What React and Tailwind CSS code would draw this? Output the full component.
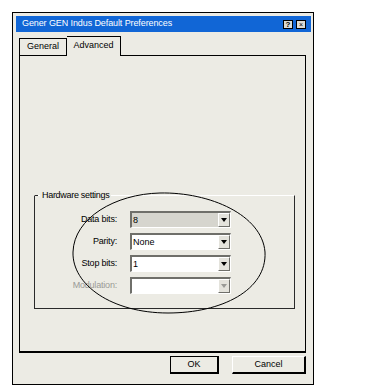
import React from "react";

const font = { fontFamily: '"Liberation Sans", Arial, sans-serif' };

const Combo = ({ value, disabled, grey }) => {
  return (
    <div
      className={`w-[101px] h-[17px] flex border-t-2 border-l-2 border-t-[#6f6f6a] border-l-[#6f6f6a] border-b border-r border-b-white border-r-white ${
        grey ? "bg-[#d6d5ce]" : "bg-white"
      } ${disabled ? "bg-[#ecebe4]" : ""}`}
    >
      <div className="flex-1 text-[9px] leading-[14px] pl-[1px] text-black">{value}</div>
      <div className="w-[12px] h-[14px] bg-[#e4e3dc] border-t border-l border-white border-r border-b border-r-[#6f6f6a] border-b-[#6f6f6a] flex items-center justify-center">
        <div
          className={`w-0 h-0 border-l-[3px] border-r-[3px] border-t-[4px] border-l-transparent border-r-transparent ${
            disabled ? "border-t-[#9a9a96]" : "border-t-black"
          }`}
        />
      </div>
    </div>
  );
};

const Row = ({ label, value, grey, disabled }) => (
  <div className="flex items-center h-[17px]">
    <div
      className={`w-[85px] text-right text-[9px] tracking-[-0.2px] pr-[13px] ${
        disabled ? "text-[#9a9a96]" : "text-black"
      }`}
    >
      {label}
    </div>
    <Combo value={value} grey={grey} disabled={disabled} />
  </div>
);

export default function App() {
  return (
    <div className="w-[392px] h-[389px] bg-white relative overflow-hidden" style={font}>
      <div className="ml-[12px] mt-[12px] w-[302px] h-[373px] border border-black bg-[#ecebe4] pt-[3px] pl-[3px] pr-[2px] flex flex-col">
        {/* title bar */}
        <div className="h-[16px] bg-[#1166d6] flex items-center pl-[6px] pr-[5px]">
          <div className="flex-1 text-white text-[9px] tracking-[-0.1px]">
            Gener GEN Indus Default Preferences
          </div>
          <div className="flex gap-[3px]">
            <div className="w-[10px] h-[9px] bg-[#dcdbd4] border border-black text-[8px] leading-[7px] font-bold text-center text-black">
              ?
            </div>
            <div className="w-[10px] h-[9px] bg-[#dcdbd4] border border-black text-[7px] leading-[7px] text-center text-black">
              ×
            </div>
          </div>
        </div>

        {/* tabs */}
        <div className="mt-[4px] ml-[3px] mr-[5px] flex flex-col">
          <div className="flex items-end h-[19px]">
            <div className="w-[48px] h-[17px] border border-b-0 border-black text-[9px] leading-[15px] text-center text-black">
              General
            </div>
            <div className="w-[54px] h-[20px] border border-black border-l-0 border-b-0 bg-[#ecebe4] text-[9px] leading-[17px] text-center text-black relative top-[1px]">
              Advanced
            </div>
          </div>
          <div className="h-[298px] border border-black border-b-2 pt-[139px] pl-[14px] pr-[10px]">
            {/* group box */}
            <div className="relative h-[114px] border-l border-r border-b border-[#2a2a2a] border-t border-t-white">
              <div className="absolute -top-[1px] left-0 w-[3px] h-[1px] bg-[#2a2a2a]" />
              <div className="absolute -top-[7px] left-[5px] px-[2px] bg-[#ecebe4] text-[9px] tracking-[-0.3px] leading-[12px] text-black">
                Hardware settings
              </div>
              <div className="pt-[15px] pl-[10px] flex flex-col gap-[5px]">
                <Row label="Data bits:" value="8" grey />
                <Row label="Parity:" value="None" />
                <Row label="Stop bits:" value="1" />
                <Row label="Modulation:" value="" disabled />
              </div>
            </div>
          </div>
        </div>

        {/* buttons */}
        <div className="flex justify-end gap-[13px] pr-[5px] mt-[3px]">
          <div className="w-[49px] h-[18px] border border-black border-r-2 border-b-2 text-[9px] leading-[15px] text-center text-black">
            OK
          </div>
          <div className="w-[74px] h-[18px] border border-t-white border-l-white border-r-2 border-b-2 border-r-black border-b-black text-[9px] leading-[15px] text-center text-black">
            Cancel
          </div>
        </div>
      </div>

      {/* hand-drawn ellipse */}
      <svg className="absolute left-0 top-0 pointer-events-none" width="392" height="389">
        <path
          d="M160 193 C 210 192, 262 215, 265 252 C 267 290, 222 313, 168 313 C 112 313, 72 285, 73 252 C 74 218, 115 194, 160 193 Z"
          fill="none"
          stroke="black"
          strokeWidth="1"
        />
      </svg>
    </div>
  );
}
